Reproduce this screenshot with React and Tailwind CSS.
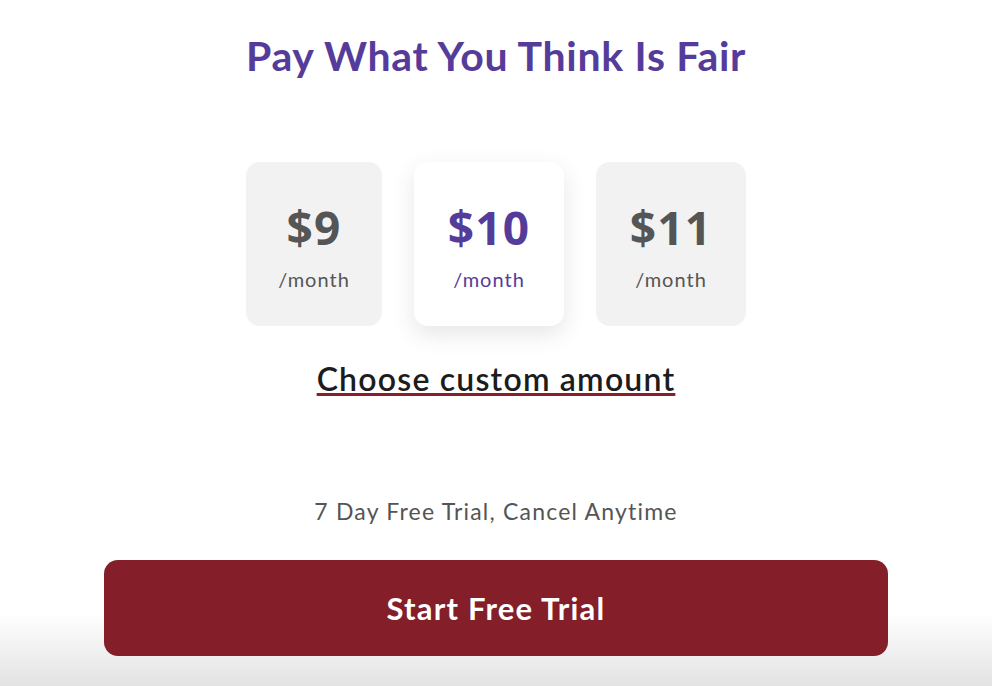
import { useState } from 'react';

const plans = [
  { id: 9, price: '$9', width: 'w-[136px]' },
  { id: 10, price: '$10', width: 'w-[150px]' },
  { id: 11, price: '$11', width: 'w-[150px]' },
];

export default function App() {
  const [selected, setSelected] = useState(10);

  return (
    <div className="min-h-[686px] bg-white flex flex-col font-['Lato','Noto_Sans',sans-serif]">
      <div className="flex flex-col items-center pt-[32px]">
        <h1 className="text-[41px] leading-[48px] font-bold text-[#553c9a] tracking-[0.7px]">
          Pay What You Think Is Fair
        </h1>

        <div className="flex gap-[32px] mt-[82px]">
          {plans.map(p => {
            const active = p.id === selected;
            return (
              <button
                key={p.id}
                onClick={() => setSelected(p.id)}
                className={`${p.width} h-[164px] rounded-[14px] flex flex-col items-center pt-[41px] cursor-pointer ${
                  active ? 'bg-white shadow-[0_8px_22px_rgba(60,60,80,0.13)]' : 'bg-[#f2f2f2]'
                }`}
              >
                <span className={`font-['Open_Sans',sans-serif] text-[46px] leading-[48px] font-bold tracking-[1.2px] ${active ? 'text-[#553c9a]' : 'text-[#555555]'}`}>
                  {p.price}
                </span>
                <span className={`mt-[16px] text-[20px] leading-[24px] tracking-[1px] ${active ? 'text-[#553c9a]' : 'text-[#555555]'}`}>
                  /month
                </span>
              </button>
            );
          })}
        </div>

        <a
          href="#"
          className="mt-[35px] text-[32px] leading-[36px] font-semibold text-[#1c1c1c] tracking-[1.2px] underline decoration-[#8b1e2a] decoration-[3px] underline-offset-[2px]"
        >
          Choose custom amount
        </a>

        <p className="mt-[100px] text-[23px] leading-[28px] text-[#555555] tracking-[1.2px]">
          7 Day Free Trial, Cancel Anytime
        </p>
      </div>

      <div className="mt-[15px] pt-[20px] pb-[30px] bg-gradient-to-b from-white from-[50%] to-[#e3e3e3] flex justify-center">
        <button className="w-[784px] h-[96px] rounded-[14px] bg-[#841e28] text-white text-[31px] font-bold tracking-[1.2px] cursor-pointer">
          Start Free Trial
        </button>
      </div>
    </div>
  );
}
